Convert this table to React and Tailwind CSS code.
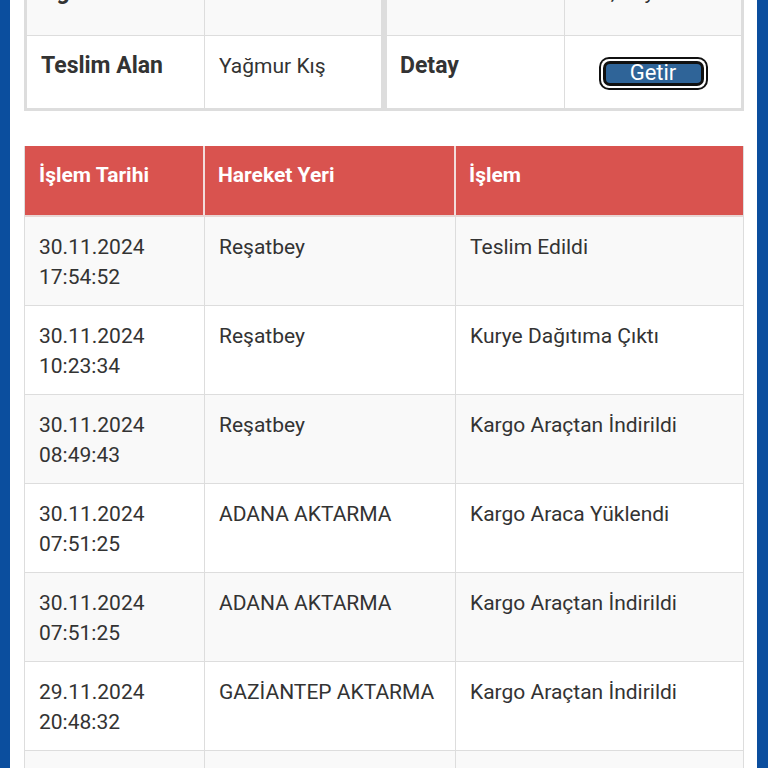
import React from "react";

const rows = [
  ["30.11.2024", "17:54:52", "Reşatbey", "Teslim Edildi"],
  ["30.11.2024", "10:23:34", "Reşatbey", "Kurye Dağıtıma Çıktı"],
  ["30.11.2024", "08:49:43", "Reşatbey", "Kargo Araçtan İndirildi"],
  ["30.11.2024", "07:51:25", "ADANA AKTARMA", "Kargo Araca Yüklendi"],
  ["30.11.2024", "07:51:25", "ADANA AKTARMA", "Kargo Araçtan İndirildi"],
  ["29.11.2024", "20:48:32", "GAZİANTEP AKTARMA", "Kargo Araçtan İndirildi"],
  ["29.11.2024", "18:12:05", "GAZİANTEP AKTARMA", "Kargo Araca Yüklendi"],
];

function GetirButton() {
  return (
    <div className="flex justify-center pt-[21px]">
      <div className="rounded-[10px] bg-[#111111] p-[2px]">
        <div className="rounded-[8px] bg-white p-[2px]">
          <div className="rounded-[7px] bg-[#111111] p-[3px]">
            <div className="flex h-[19px] w-[95px] items-center justify-center rounded-[4px] bg-[#2f6498] text-[22px] leading-[19px] text-white">
              <span className="-mt-[2px]">Getir</span>
            </div>
          </div>
        </div>
      </div>
    </div>
  );
}

export default function App() {
  return (
    <div
      className="flex h-[768px] w-[768px] overflow-hidden bg-white text-[#333333]"
      style={{ fontFamily: "Roboto, 'Noto Sans', sans-serif" }}
    >
      <div className="w-[10px] shrink-0 bg-[#0b4e9e]" />
      <div className="flex-1 pl-[14px] pr-[13px]">
        <div className="-mt-[39px] flex">
          <div className="w-[360px] border-[3px] border-[#dddddd] bg-white">
            <div className="flex h-[72px] bg-[#f9f9f9] border-b border-[#dddddd]">
              <div className="w-[178px] shrink-0 border-r border-[#dddddd] pl-[14px] pt-[13px] text-[23px] font-bold leading-[30px]">Ağırlık</div>
              <div className="flex-1 pl-[14px] pt-[13px] text-[21px] leading-[30px]"></div>
            </div>
            <div className="flex h-[72px] bg-white">
              <div className="w-[178px] shrink-0 border-r border-[#dddddd] pl-[14px] pt-[15px] text-[23px] font-bold leading-[30px]">Teslim Alan</div>
              <div className="flex-1 pl-[14px] pt-[15px] text-[21px] leading-[30px]">Yağmur Kış</div>
            </div>
          </div>
          <div className="w-[360px] border-[3px] border-[#dddddd] bg-white">
            <div className="flex h-[72px] bg-[#f9f9f9] border-b border-[#dddddd]">
              <div className="w-[178px] shrink-0 border-r border-[#dddddd] pl-[13px] pt-[13px] text-[23px] font-bold leading-[30px]">Desi</div>
              <div className="flex-1 pl-[34px] pt-[13px] text-[21px] leading-[30px]">1, Kayıt</div>
            </div>
            <div className="flex h-[72px] bg-white">
              <div className="w-[178px] shrink-0 border-r border-[#dddddd] pl-[13px] pt-[15px] text-[23px] font-bold leading-[30px]">Detay</div>
              <div className="flex-1">
                <GetirButton />
              </div>
            </div>
          </div>
        </div>

        <div className="mt-[35px] w-[720px] border-x border-[#dddddd]">
          <div className="flex h-[71px] border-b-2 border-[#e8d6d4] bg-[#d9534f] text-[21px] font-bold leading-[30px] text-white">
            <div className="w-[180px] shrink-0 border-r-2 border-[#f3dcdb] pl-[14px] pt-[14px]">İşlem Tarihi</div>
            <div className="w-[251px] shrink-0 border-r-2 border-[#f3dcdb] pl-[13px] pt-[14px]">Hareket Yeri</div>
            <div className="flex-1 pl-[13px] pt-[14px]">İşlem</div>
          </div>
          {rows.map((r, i) => (
            <div
              key={i}
              className={`flex h-[89px] border-b border-[#dddddd] text-[21px] leading-[30px] ${i % 2 === 0 ? "bg-[#f9f9f9]" : "bg-white"}`}
            >
              <div className="w-[180px] shrink-0 border-r border-[#dddddd] pl-[14px] pt-[15px]">
                <div>{r[0]}</div>
                <div>{r[1]}</div>
              </div>
              <div className="w-[251px] shrink-0 border-r border-[#dddddd] pl-[14px] pt-[15px]">{r[2]}</div>
              <div className="flex-1 pl-[14px] pt-[15px]">{r[3]}</div>
            </div>
          ))}
        </div>
      </div>
      <div className="w-[11px] shrink-0 bg-[#0b4e9e]" />
    </div>
  );
}
